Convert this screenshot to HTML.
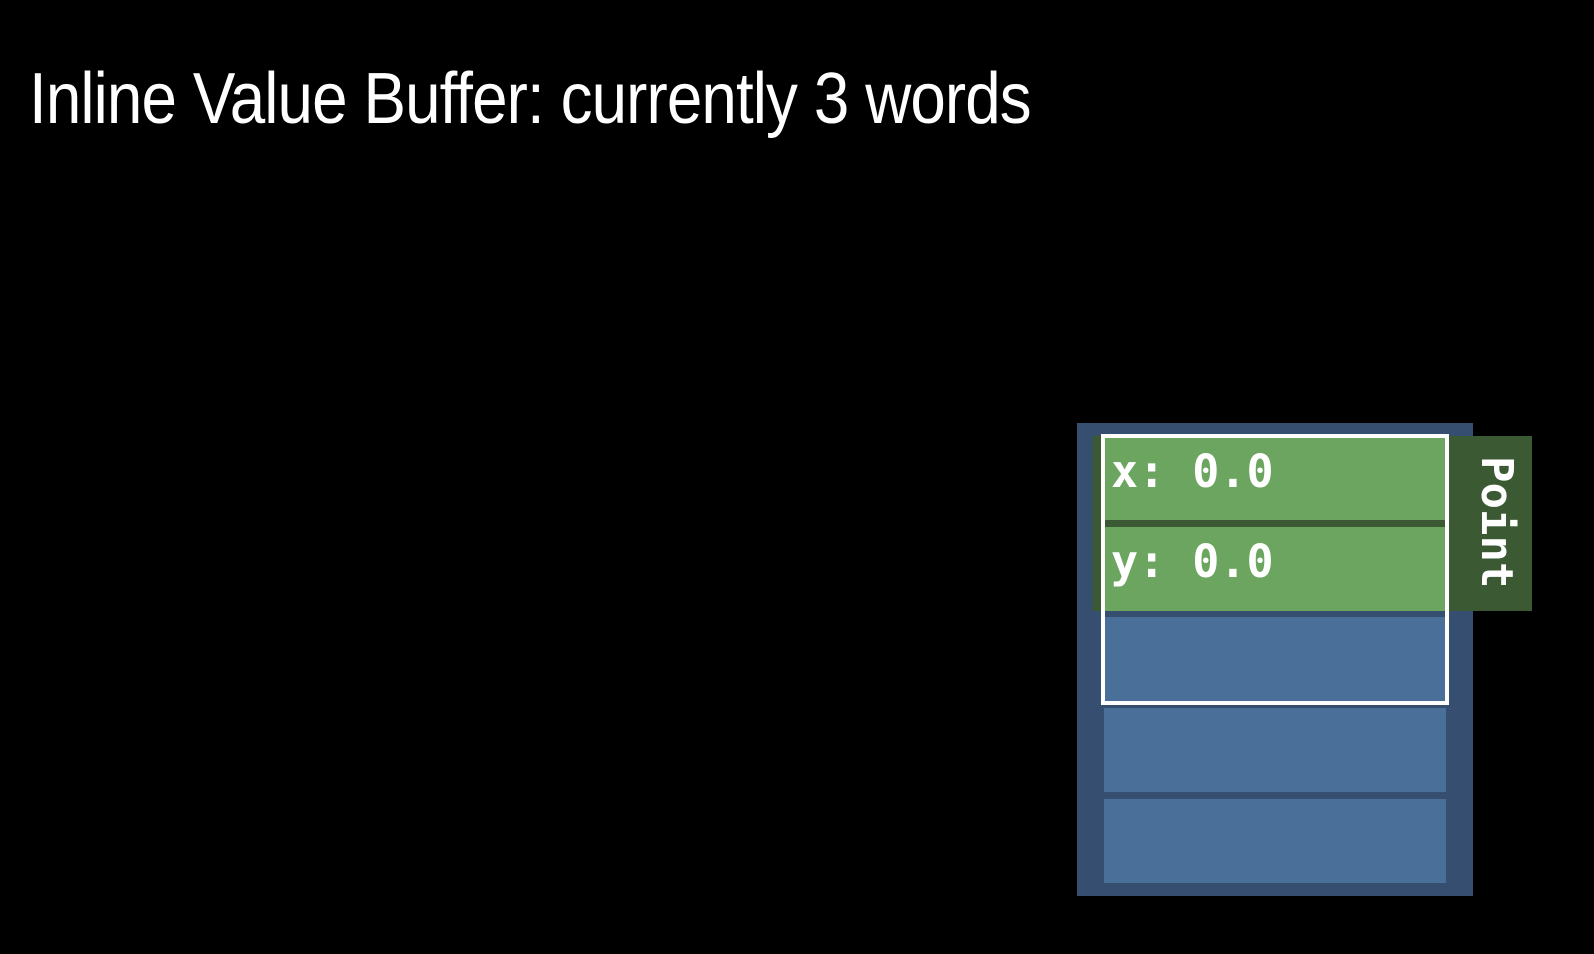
<!DOCTYPE html>
<html><head><meta charset="utf-8"><style>
html,body{margin:0;padding:0;background:#000;width:1594px;height:954px;overflow:hidden;position:relative}
div{position:absolute;box-sizing:border-box}
.title{left:29px;top:58px;font-family:"Liberation Sans",sans-serif;font-size:72px;color:#fff;white-space:nowrap;transform-origin:0 0;transform:scaleX(0.885);letter-spacing:-1px}
.mono{font-family:"DejaVu Sans Mono","Liberation Mono",monospace;color:#fff;font-size:45px;font-weight:bold;white-space:nowrap}
</style></head><body>
<div class="title">Inline Value Buffer: currently 3 words</div>
<div style="left:1077px;top:423px;width:396px;height:473px;background:#364f70"></div>
<div style="left:1093px;top:436px;width:20px;height:175px;background:#3b5a33"></div>
<div style="left:1448px;top:436px;width:84px;height:175px;background:#3b5a33"></div>
<div style="left:1104px;top:436px;width:342px;height:175px;background:#3b5a33"></div>
<div style="left:1104px;top:438px;width:342px;height:82px;background:#6ba55f"></div>
<div style="left:1104px;top:527px;width:342px;height:84px;background:#6ba55f"></div>
<div style="left:1104px;top:617px;width:342px;height:85px;background:#4a6f99"></div>
<div style="left:1104px;top:708px;width:342px;height:84px;background:#4a6f99"></div>
<div style="left:1104px;top:799px;width:342px;height:84px;background:#4a6f99"></div>
<div style="left:1101px;top:434px;width:348px;height:271px;border:4px solid #fff"></div>
<div class="mono" style="left:1111px;top:447px;line-height:50px">x: 0.0</div>
<div class="mono" style="left:1111px;top:537px;line-height:50px">y: 0.0</div>
<div class="mono" style="left:1471px;top:456px;font-size:44px;line-height:50px;transform-origin:0 0;transform:translate(50px,0) rotate(90deg)">Point</div>
</body></html>
